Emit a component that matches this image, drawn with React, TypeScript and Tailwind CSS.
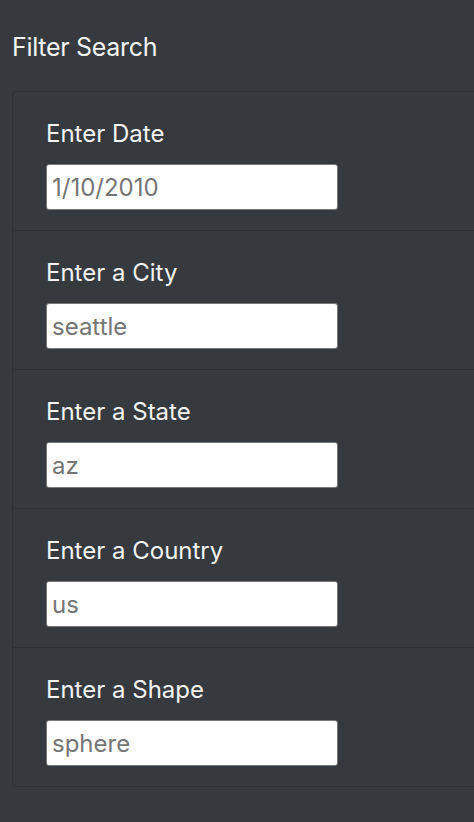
const fields = [
  { label: 'Enter Date', placeholder: '1/10/2010' },
  { label: 'Enter a City', placeholder: 'seattle' },
  { label: 'Enter a State', placeholder: 'az' },
  { label: 'Enter a Country', placeholder: 'us' },
  { label: 'Enter a Shape', placeholder: 'sphere' },
];

export default function App() {
  return (
    <div className="min-h-screen overflow-hidden bg-[#363a3f] font-['Inter',sans-serif] text-[#f4f4f4]">
      <div className="pl-3 pt-[32px]">
        <h4 className="mb-[29px] text-[25px] leading-[30px] tracking-[-0.3px]">Filter Search</h4>
        <ul className="-mr-6 rounded border border-black/15">
          {fields.map((f) => (
            <li key={f.label} className="border-b border-black/15 pb-[20px] pl-[33px] pt-[24px] last:border-b-0">
              <label className="block text-[24px] leading-[36px]">{f.label}</label>
              <input
                type="text"
                placeholder={f.placeholder}
                className="mt-[12px] block h-[46px] w-[292px] rounded-[3px] border border-[#777] bg-white px-[5px] text-[24px] text-black placeholder:text-[#757575]"
              />
            </li>
          ))}
        </ul>
      </div>
    </div>
  );
}
